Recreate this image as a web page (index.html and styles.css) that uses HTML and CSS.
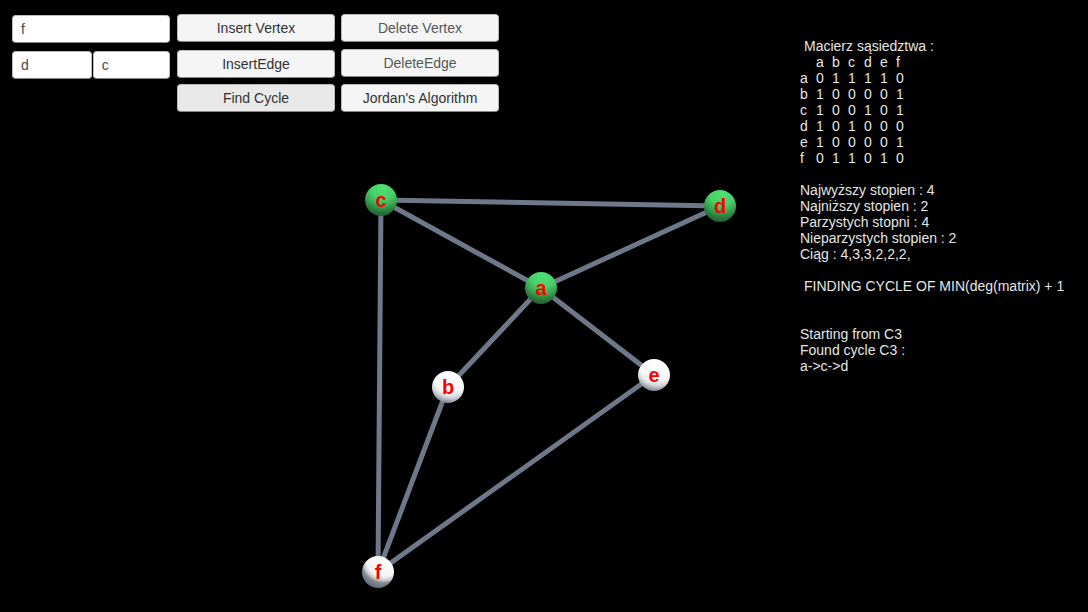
FILE: index.html
```html
<!DOCTYPE html>
<html lang="pl">
<head>
<meta charset="utf-8">
<meta name="viewport" content="width=device-width, initial-scale=1">
<title>Graph editor</title>
<link rel="stylesheet" href="styles.css">
</head>
<body>
<main class="app">
  <svg class="graph" viewBox="0 0 1088 612" role="img" aria-label="Graph">
    <defs>
      <radialGradient id="green" cx="0.56" cy="0.1" r="0.95">
        <stop offset="0" stop-color="#4de273"/>
        <stop offset="0.4" stop-color="#48cf69"/>
        <stop offset="0.62" stop-color="#3aa653"/>
        <stop offset="0.8" stop-color="#2a7a3d"/>
        <stop offset="1" stop-color="#1f562d"/>
      </radialGradient>
      <radialGradient id="white" cx="0.6" cy="0.12" r="0.95">
        <stop offset="0" stop-color="#ffffff"/>
        <stop offset="0.6" stop-color="#f7f7f8"/>
        <stop offset="0.75" stop-color="#d3d5da"/>
        <stop offset="0.88" stop-color="#979ca6"/>
        <stop offset="1" stop-color="#646c79"/>
      </radialGradient>
      <radialGradient id="white-low" cx="0.68" cy="0.12" r="0.9">
        <stop offset="0" stop-color="#ffffff"/>
        <stop offset="0.58" stop-color="#f4f4f6"/>
        <stop offset="0.72" stop-color="#c4c7cd"/>
        <stop offset="0.8" stop-color="#858b97"/>
        <stop offset="1" stop-color="#646c79"/>
      </radialGradient>
    </defs>
    <g class="edges">
      <line x1="381" y1="200" x2="720" y2="206"/>
      <line x1="381" y1="200" x2="541" y2="288"/>
      <line x1="720" y1="206" x2="541" y2="288"/>
      <line x1="381" y1="200" x2="378" y2="572"/>
      <line x1="541" y1="288" x2="448" y2="387"/>
      <line x1="541" y1="288" x2="654" y2="375"/>
      <line x1="448" y1="387" x2="378" y2="572"/>
      <line x1="654" y1="375" x2="378" y2="572"/>
    </g>
    <g class="vertices">
      <circle cx="381" cy="200" r="16" fill="url(#green)"/><text x="381" y="207">c</text>
      <circle cx="720" cy="206" r="16" fill="url(#green)"/><text x="720" y="213">d</text>
      <circle cx="541" cy="288" r="16" fill="url(#green)"/><text x="541" y="295">a</text>
      <circle cx="448" cy="387" r="16" fill="url(#white)"/><text x="448" y="394">b</text>
      <circle cx="654" cy="375" r="16" fill="url(#white)"/><text x="654" y="382">e</text>
      <circle cx="378" cy="572" r="16" fill="url(#white-low)"/><text x="378" y="579">f</text>
    </g>
  </svg>

  <form class="toolbar">
    <div class="fields">
      <input class="field" type="text" value="f" aria-label="Vertex">
      <div class="pair">
        <input class="field field-from" type="text" value="d" aria-label="Edge from">
        <input class="field field-to" type="text" value="c" aria-label="Edge to">
      </div>
    </div>
    <div class="actions actions-insert">
      <button class="button" type="button">Insert Vertex</button>
      <button class="button" type="button">InsertEdge</button>
      <button class="button button-selected" type="button">Find Cycle</button>
    </div>
    <div class="actions actions-delete">
      <button class="button button-muted" type="button">Delete Vertex</button>
      <button class="button button-muted" type="button">DeleteEdge</button>
      <button class="button" type="button">Jordan's Algorithm</button>
    </div>
  </form>

  <section class="log">
    <h2 class="title">Macierz sąsiedztwa :</h2>
    <table class="matrix">
      <thead>
        <tr><td></td><th>a</th><th>b</th><th>c</th><th>d</th><th>e</th><th>f</th></tr>
      </thead>
      <tbody>
        <tr><th>a</th><td>0</td><td>1</td><td>1</td><td>1</td><td>1</td><td>0</td></tr>
        <tr><th>b</th><td>1</td><td>0</td><td>0</td><td>0</td><td>0</td><td>1</td></tr>
        <tr><th>c</th><td>1</td><td>0</td><td>0</td><td>1</td><td>0</td><td>1</td></tr>
        <tr><th>d</th><td>1</td><td>0</td><td>1</td><td>0</td><td>0</td><td>0</td></tr>
        <tr><th>e</th><td>1</td><td>0</td><td>0</td><td>0</td><td>0</td><td>1</td></tr>
        <tr><th>f</th><td>0</td><td>1</td><td>1</td><td>0</td><td>1</td><td>0</td></tr>
      </tbody>
    </table>
    <div class="stats">
      <p>Najwyższy stopien : 4</p>
      <p>Najniższy stopien : 2</p>
      <p>Parzystych stopni : 4</p>
      <p>Nieparzystych stopien : 2</p>
      <p>Ciąg : 4,3,3,2,2,2,</p>
    </div>
    <h2 class="title">FINDING CYCLE OF MIN(deg(matrix) + 1</h2>
    <div class="result">
      <p>Starting from C3</p>
      <p>Found cycle C3 :</p>
      <p>a-&gt;c-&gt;d</p>
    </div>
  </section>
</main>
</body>
</html>
```
FILE: styles.css
```css
* {
  box-sizing: border-box;
}

body {
  margin: 0;
  background: #000;
  font-family: "Liberation Sans", Arial, sans-serif;
  font-size: 14px;
  line-height: 16px;
}

.app {
  position: relative;
  display: flex;
  justify-content: space-between;
  align-items: flex-start;
  min-height: 100vh;
}

/* The graph canvas lies behind the controls and the log. */
.graph {
  position: absolute;
  inset: 0;
  width: 100%;
  height: 100%;
}

.edges line {
  stroke: #6e788a;
  stroke-width: 5;
}

.vertices text {
  fill: #f00;
  font-size: 20px;
  font-weight: 700;
  text-anchor: middle;
}

.toolbar {
  position: relative;
  display: flex;
  padding: 14px 0 0 12px;
}

.fields {
  display: flex;
  flex-direction: column;
  gap: 8px;
  width: 158px;
  padding-top: 1px;
  margin-right: 7px;
}

.pair {
  display: flex;
  gap: 1px;
}

.field {
  width: 100%;
  height: 28px;
  padding: 0 8px;
  border: 1px solid #bbb;
  border-bottom-color: #888;
  border-radius: 4px;
  background: #fff;
  color: #484848;
  font: inherit;
}

.field-from {
  flex: 80;
  min-width: 0;
}

.field-to {
  flex: 77;
  min-width: 0;
}

.actions {
  display: grid;
  align-items: start;
  width: 158px;
}

.actions-insert {
  grid-template-rows: 36px 34px 28px;
  margin-right: 6px;
}

.actions-delete {
  grid-template-rows: 35px 35px 28px;
}

.button {
  height: 28px;
  padding: 0;
  border: 1px solid #bbb;
  border-bottom-color: #888;
  border-radius: 4px;
  background: #f5f5f5;
  color: #323232;
  font: inherit;
}

.button-selected {
  background: #e9e9e9;
}

.button-muted {
  color: #555;
}

.log {
  position: relative;
  width: 288px;
  padding-top: 38px;
  color: #e6e6e6;
}

.title {
  margin: 0;
  padding-left: 4px;
  font-size: 14px;
  font-weight: 400;
}

.matrix {
  border-collapse: collapse;
  table-layout: fixed;
  width: 112px;
}

.matrix th,
.matrix td {
  height: 16px;
  padding: 0;
  font-weight: 400;
  text-align: left;
}

.log p {
  margin: 0;
}

.stats {
  padding: 16px 0;
}

.result {
  padding-top: 32px;
}
```
